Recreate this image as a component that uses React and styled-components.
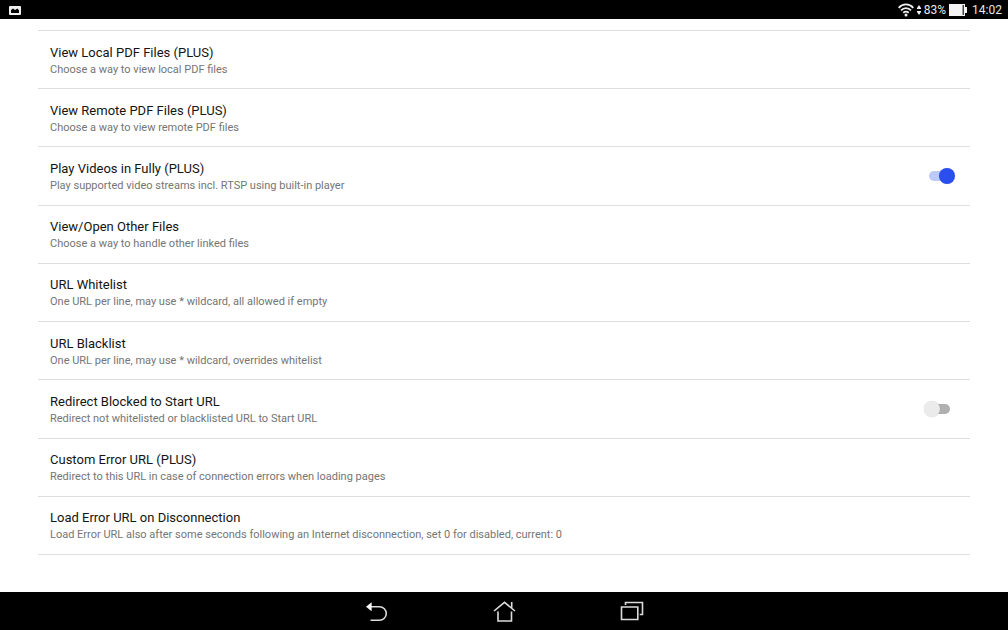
import React, { useState } from "react";
import styled, { createGlobalStyle } from "styled-components";

const colors = {
  black: "#000",
  white: "#fff",
  title: "#141414",
  summary: "#757575",
  divider: "#dedede",
  accent: "#2b4eee",
  accentLight: "#bccafa",
  track: "#b0b0b0",
  thumb: "#ebebeb"
};

const GlobalStyle = createGlobalStyle`
  * {
    box-sizing: border-box;
  }
  body {
    margin: 0;
    background: ${colors.white};
    font-family: Roboto, "Noto Sans", sans-serif;
  }
`;

const Screen = styled.div`
  display: flex;
  flex-direction: column;
  min-height: 100vh;
`;

const StatusBar = styled.header`
  display: flex;
  align-items: center;
  justify-content: space-between;
  height: 19px;
  padding: 1px 6px 0 9px;
  background: ${colors.black};
  color: #e8e8e8;
  font-size: 12px;
  line-height: 18px;
`;

const StatusIcons = styled.div`
  display: flex;
  align-items: center;
  gap: 3px;
  svg {
    display: block;
  }
`;

const Clock = styled.time`
  margin-left: 2px;
`;

const Content = styled.main`
  flex: 1;
  display: flex;
  padding: 11px 38px 37px;
`;

const PrefList = styled.ul`
  flex: 1;
  display: grid;
  grid-auto-rows: 1fr;
  margin: 0;
  padding: 0;
  list-style: none;
  border-top: 1px solid ${colors.divider};
`;

const PrefItem = styled.li`
  display: flex;
  border-bottom: 1px solid ${colors.divider};
`;

const PrefRow = styled.button`
  flex: 1;
  display: flex;
  align-items: center;
  justify-content: space-between;
  padding: 0 20px 0 12px;
  border: 0;
  background: transparent;
  font-family: inherit;
  text-align: left;
  cursor: pointer;
`;

const PrefText = styled.span`
  display: flex;
  flex-direction: column;
  padding-top: 3px;
`;

const Title = styled.span`
  color: ${colors.title};
  font-size: 13px;
  line-height: 17px;
`;

const Summary = styled.span`
  color: ${colors.summary};
  font-size: 11px;
  line-height: 18px;
`;

const Switch = styled.input.attrs({ type: "checkbox", role: "switch" })`
  appearance: none;
  position: relative;
  width: 21px;
  height: 10px;
  margin: 0;
  border-radius: 5px;
  background: ${colors.track};
  cursor: pointer;
  &::before {
    content: "";
    position: absolute;
    top: -3px;
    left: -5px;
    width: 16px;
    height: 16px;
    border-radius: 50%;
    background: ${colors.thumb};
    box-shadow: 0 0 1px rgba(0, 0, 0, 0.2);
  }
  &:checked {
    background: ${colors.accentLight};
  }
  &:checked::before {
    left: 10px;
    background: ${colors.accent};
  }
`;

const NavBar = styled.nav`
  display: flex;
  align-items: center;
  justify-content: center;
  gap: 96px;
  height: 38px;
  background: ${colors.black};
`;

const NavButton = styled.button`
  display: flex;
  align-items: center;
  justify-content: center;
  width: 32px;
  height: 32px;
  padding: 0;
  border: 0;
  background: transparent;
  cursor: pointer;
  svg {
    fill: none;
    stroke: #dcdcdc;
    stroke-width: 1.6;
  }
`;

const prefs = [
  { title: "View Local PDF Files (PLUS)", summary: "Choose a way to view local PDF files" },
  { title: "View Remote PDF Files (PLUS)", summary: "Choose a way to view remote PDF files" },
  {
    title: "Play Videos in Fully (PLUS)",
    summary: "Play supported video streams incl. RTSP using built-in player",
    toggle: true,
    on: true
  },
  { title: "View/Open Other Files", summary: "Choose a way to handle other linked files" },
  { title: "URL Whitelist", summary: "One URL per line, may use * wildcard, all allowed if empty" },
  { title: "URL Blacklist", summary: "One URL per line, may use * wildcard, overrides whitelist" },
  {
    title: "Redirect Blocked to Start URL",
    summary: "Redirect not whitelisted or blacklisted URL to Start URL",
    toggle: true,
    on: false
  },
  {
    title: "Custom Error URL (PLUS)",
    summary: "Redirect to this URL in case of connection errors when loading pages"
  },
  {
    title: "Load Error URL on Disconnection",
    summary:
      "Load Error URL also after some seconds following an Internet disconnection, set 0 for disabled, current: 0"
  }
];

const PictureIcon = () => (
  <svg width="12" height="9" viewBox="0 0 12 9" aria-hidden="true">
    <rect width="12" height="9" rx="1" fill="#f0f0f0" />
    <path d="M2 7V4l2-1.500 2 1.500 2.500-1.500L10 4.500V7z" fill="#000" />
  </svg>
);

const WifiIcon = () => (
  <svg width="16" height="14" viewBox="0 0 16 14" fill="none" stroke="#f0f0f0" strokeWidth="1.800" aria-hidden="true">
    <path d="M.7 4.800C4.700.3 11.300.3 15.300 4.800M3 7.400c2.800-3 7.200-3 10 0M5.300 9.900c1.500-1.600 3.900-1.600 5.400 0" />
    <circle cx="8" cy="12" r="1.500" fill="#f0f0f0" stroke="none" />
  </svg>
);

const DataIcon = () => (
  <svg width="4" height="10" viewBox="0 0 4 10" fill="#f0f0f0" aria-hidden="true">
    <path d="M2 0l2 3v1H0V3zM2 10L0 7V6h4v1z" />
  </svg>
);

const BatteryIcon = () => (
  <svg width="18" height="12" viewBox="0 0 18 12" aria-hidden="true">
    <path d="M0 0h16v3h2v6h-2v3H0z" fill="#f4f4f4" />
    <path d="M13.500 1h1.500v10h-1.500z" fill="#444" />
  </svg>
);

const Preference = ({ title, summary, toggle, on }) => {
  const [checked, setChecked] = useState(Boolean(on));
  const text = (
    <PrefText>
      <Title>{title}</Title>
      <Summary>{summary}</Summary>
    </PrefText>
  );

  return (
    <PrefItem>
      {toggle ? (
        <PrefRow as="label">
          {text}
          <Switch checked={checked} onChange={e => setChecked(e.target.checked)} />
        </PrefRow>
      ) : (
        <PrefRow type="button">{text}</PrefRow>
      )}
    </PrefItem>
  );
};

const App = () => (
  <Screen>
    <GlobalStyle />
    <StatusBar>
      <PictureIcon />
      <StatusIcons>
        <WifiIcon />
        <DataIcon />
        <span>83%</span>
        <BatteryIcon />
        <Clock>14:02</Clock>
      </StatusIcons>
    </StatusBar>
    <Content>
      <PrefList>
        {prefs.map(pref => (
          <Preference key={pref.title} {...pref} />
        ))}
      </PrefList>
    </Content>
    <NavBar>
      <NavButton type="button" aria-label="Back">
        <svg width="24" height="22" viewBox="0 0 24 22">
          <path d="M7 6.700h8.500a6.800 6.800 0 0 1 0 13.600H6.500" />
          <path d="M2 6.700L7.600 2.200v9z" fill="#fff" stroke="none" />
        </svg>
      </NavButton>
      <NavButton type="button" aria-label="Home">
        <svg width="24" height="22" viewBox="0 0 24 22">
          <path d="M2 11L12.500 2.400 23 11M19.700 8V2M6 11.500v9.500h13.500v-9.500" />
        </svg>
      </NavButton>
      <NavButton type="button" aria-label="Recent apps">
        <svg width="24" height="22" viewBox="0 0 24 22">
          <path d="M1.500 7h16.300v12.500H1.500zM5.500 5V2.500h17v12h-2.800" />
        </svg>
      </NavButton>
    </NavBar>
  </Screen>
);

export default App;
